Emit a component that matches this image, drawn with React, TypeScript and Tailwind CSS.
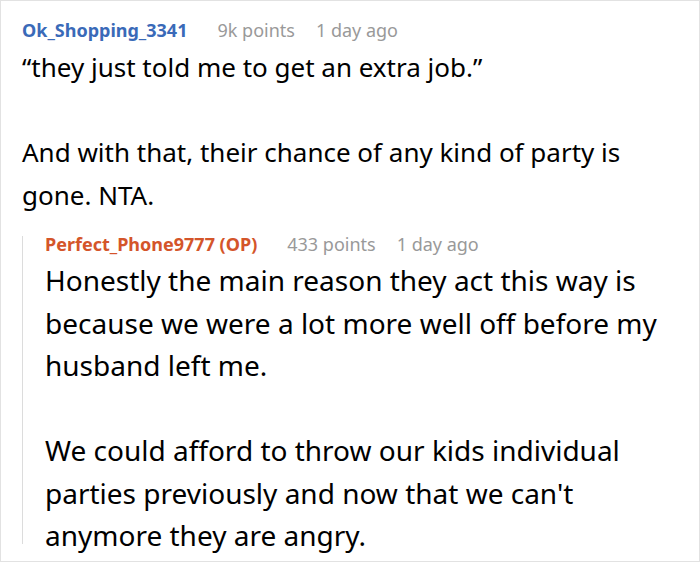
import React from 'react';

const Meta: React.FC<{ name: string; color: string; points: string; lead: string }> = ({ name, color, points, lead }) => (
    <div className={`flex items-baseline text-[18px] ${lead}`}>
        <span className={`font-bold ${color}`}>{name}</span>
        <span className="ml-[30px] text-[#999999]">{points}</span>
        <span className="ml-[21px] text-[#999999]">1 day ago</span>
    </div>
);

export default function App() {
    return (
        <div
            className="w-[700px] h-[562px] bg-white border border-[#e2e2e2] overflow-hidden text-black"
            style={{ fontFamily: '"Noto Sans", "Open Sans", sans-serif' }}
        >
            <div className="pl-[21px] pt-[17px]">
                <Meta name="Ok_Shopping_3341" color="text-[#3a6ab8]" points="9k points" lead="leading-[24px]" />
                <div className="text-[26px] leading-[42.5px] mt-[4px]">
                    <p>“they just told me to get an extra job.”</p>
                    <p>&nbsp;</p>
                    <p>And with that, their chance of any kind of party is</p>
                    <p>gone. NTA.</p>
                </div>
            </div>
            <div className="ml-[21px] mt-[20px] border-l border-[#dcdcdc] pl-[22px] h-[308px]">
                <Meta name="Perfect_Phone9777 (OP)" color="text-[#d4552a]" points="433 points" lead="leading-[16px]" />
                <div className="text-[28px] leading-[42.5px] mt-[7px]">
                    <p>Honestly the main reason they act this way is</p>
                    <p>because we were a lot more well off before my</p>
                    <p>husband left me.</p>
                    <p>&nbsp;</p>
                    <p>We could afford to throw our kids individual</p>
                    <p>parties previously and now that we can't</p>
                    <p>anymore they are angry.</p>
                </div>
            </div>
        </div>
    );
}
